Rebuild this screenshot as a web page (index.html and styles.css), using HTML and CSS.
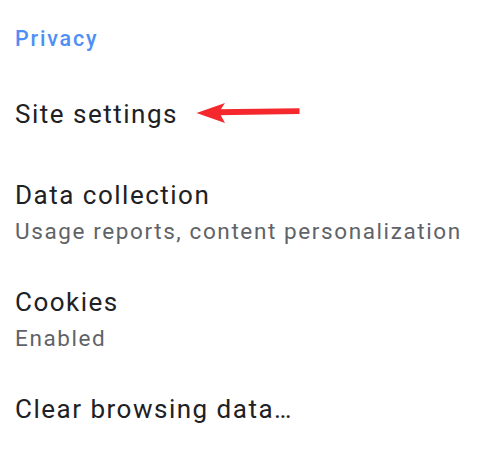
FILE: index.html
```html
<!DOCTYPE html>
<html>
<head>
<meta charset="utf-8">
<link rel="stylesheet" href="styles.css">
</head>
<body>
<div class="page">
  <div class="header">Privacy</div>
  <div class="item single">
    <div class="title">Site settings</div>
    <svg class="arrow" width="110" height="26" viewBox="0 0 110 26">
      <path d="M24 8.2 L107.5 7.2 L107.5 13 L24 14.2 Z" fill="#f5282d"/>
      <path d="M4.5 12 L33 2 L27 11 L33 22 Z" fill="#f5282d"/>
    </svg>
  </div>
  <div class="item">
    <div class="title">Data collection</div>
    <div class="subtitle">Usage reports, content personalization</div>
  </div>
  <div class="item">
    <div class="title">Cookies</div>
    <div class="subtitle">Enabled</div>
  </div>
  <div class="item single">
    <div class="title">Clear browsing data…</div>
  </div>
</div>
</body>
</html>
```

FILE: styles.css
```css
html, body {
  margin: 0;
  padding: 0;
  background: #ffffff;
}
body {
  font-family: Roboto, "Noto Sans", sans-serif;
}
.page {
  padding: 27px 0 0 15px;
  position: relative;
}
.header {
  font-size: 21.5px;
  line-height: 24px;
  font-weight: 500;
  letter-spacing: 1.8px;
  color: #4f8ff5;
  margin-bottom: 26.5px;
}
.item {
  display: flex;
  flex-direction: column;
  padding: 21px 0;
}
.item.single {
  min-height: 39px;
  position: relative;
}
.title {
  font-size: 26px;
  line-height: 30px;
  letter-spacing: 1.5px;
  color: #202124;
}
.subtitle {
  font-size: 22.5px;
  line-height: 28px;
  letter-spacing: 1.6px;
  color: #5f6368;
  margin-top: 7px;
}
.arrow {
  position: absolute;
  left: 177px;
  top: 23px;
}
```
